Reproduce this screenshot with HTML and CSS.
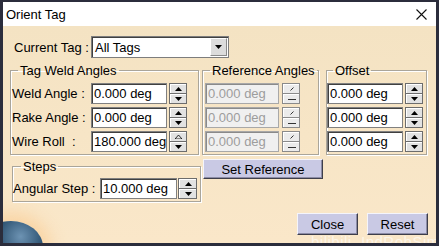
FILE: index.html
```html
<!DOCTYPE html>
<html lang="en">
<head>
    <meta charset="UTF-8">
    <title>Orient Tag</title>
    <link rel="stylesheet" href="styles.css">
</head>
<body>
    <div class="window">
        <div class="titlebar">
            <span class="title">Orient Tag</span>
            <svg class="close-x" width="11" height="11" viewBox="0 0 11 11">
                <path d="M0.5 0.5 L10.5 10.5 M10.5 0.5 L0.5 10.5" stroke="#111" stroke-width="1.1" fill="none"/>
            </svg>
        </div>

        <div class="content">
            <div class="globe"></div>

            <div class="current-row">
                <span class="current-label">Current Tag :</span>
                <div class="combo">
                    <span class="combo-text">All Tags</span>
                    <span class="combo-btn">
                        <svg width="7" height="4" viewBox="0 0 7 4"><polygon points="0,0 7,0 3.5,4" fill="#000"/></svg>
                    </span>
                </div>
            </div>

            <div class="groups">
                <fieldset class="group weld">
                    <legend>Tag Weld Angles</legend>
                    <div class="rows">
                        <div class="field">
                            <span class="label">Weld Angle :</span>
                            <div class="edit">0.000 deg</div>
                            <div class="spin">
                                <span><svg width="7" height="4" viewBox="0 0 7 4"><polygon points="0,4 7,4 3.5,0" fill="#000"/></svg></span>
                                <span><svg width="7" height="4" viewBox="0 0 7 4"><polygon points="0,0 7,0 3.5,4" fill="#000"/></svg></span>
                            </div>
                        </div>
                        <div class="field">
                            <span class="label">Rake Angle :</span>
                            <div class="edit">0.000 deg</div>
                            <div class="spin">
                                <span><svg width="7" height="4" viewBox="0 0 7 4"><polygon points="0,4 7,4 3.5,0" fill="#000"/></svg></span>
                                <span><svg width="7" height="4" viewBox="0 0 7 4"><polygon points="0,0 7,0 3.5,4" fill="#000"/></svg></span>
                            </div>
                        </div>
                        <div class="field">
                            <span class="label">Wire Roll &nbsp;:</span>
                            <div class="edit">180.00<span class="caret"></span>0 deg</div>
                            <div class="spin">
                                <span><svg width="7" height="4" viewBox="0 0 7 4"><polygon points="0,4 7,4 3.5,0" fill="none" stroke="#000" stroke-width="0.8"/></svg></span>
                                <span><svg width="7" height="4" viewBox="0 0 7 4"><polygon points="0,0 7,0 3.5,4" fill="#000"/></svg></span>
                            </div>
                        </div>
                    </div>
                </fieldset>

                <fieldset class="group ref">
                    <legend>Reference Angles</legend>
                    <div class="rows">
                        <div class="field">
                            <div class="edit disabled">0.000 deg</div>
                            <div class="spin off">
                                <span><svg width="6" height="4" viewBox="0 0 6 4"><path d="M1.5 3.5 L4.5 0.5" stroke="#333" stroke-width="1"/></svg></span>
                                <span><svg width="8" height="3" viewBox="0 0 8 3"><path d="M0 1.5 H8" stroke="#333" stroke-width="1"/></svg></span>
                            </div>
                        </div>
                        <div class="field">
                            <div class="edit disabled">0.000 deg</div>
                            <div class="spin off">
                                <span><svg width="6" height="4" viewBox="0 0 6 4"><path d="M1.5 3.5 L4.5 0.5" stroke="#333" stroke-width="1"/></svg></span>
                                <span><svg width="8" height="3" viewBox="0 0 8 3"><path d="M0 1.5 H8" stroke="#333" stroke-width="1"/></svg></span>
                            </div>
                        </div>
                        <div class="field">
                            <div class="edit disabled">0.000 deg</div>
                            <div class="spin off">
                                <span><svg width="6" height="4" viewBox="0 0 6 4"><path d="M1.5 3.5 L4.5 0.5" stroke="#333" stroke-width="1"/></svg></span>
                                <span><svg width="8" height="3" viewBox="0 0 8 3"><path d="M0 1.5 H8" stroke="#333" stroke-width="1"/></svg></span>
                            </div>
                        </div>
                    </div>
                </fieldset>

                <fieldset class="group offset">
                    <legend>Offset</legend>
                    <div class="rows">
                        <div class="field">
                            <div class="edit">0.000 deg</div>
                            <div class="spin">
                                <span><svg width="7" height="4" viewBox="0 0 7 4"><polygon points="0,4 7,4 3.5,0" fill="#000"/></svg></span>
                                <span><svg width="7" height="4" viewBox="0 0 7 4"><polygon points="0,0 7,0 3.5,4" fill="#000"/></svg></span>
                            </div>
                        </div>
                        <div class="field">
                            <div class="edit">0.000 deg</div>
                            <div class="spin">
                                <span><svg width="7" height="4" viewBox="0 0 7 4"><polygon points="0,4 7,4 3.5,0" fill="#000"/></svg></span>
                                <span><svg width="7" height="4" viewBox="0 0 7 4"><polygon points="0,0 7,0 3.5,4" fill="#000"/></svg></span>
                            </div>
                        </div>
                        <div class="field">
                            <div class="edit">0.000 deg</div>
                            <div class="spin">
                                <span><svg width="7" height="4" viewBox="0 0 7 4"><polygon points="0,4 7,4 3.5,0" fill="#000"/></svg></span>
                                <span><svg width="7" height="4" viewBox="0 0 7 4"><polygon points="0,0 7,0 3.5,4" fill="#000"/></svg></span>
                            </div>
                        </div>
                    </div>
                </fieldset>
            </div>

            <div class="steps-row">
                <fieldset class="group steps">
                    <legend>Steps</legend>
                    <div class="field">
                        <span class="label">Angular Step :</span>
                        <div class="edit">10.000 deg</div>
                        <div class="spin">
                            <span><svg width="7" height="4" viewBox="0 0 7 4"><polygon points="0,4 7,4 3.5,0" fill="#000"/></svg></span>
                            <span><svg width="7" height="4" viewBox="0 0 7 4"><polygon points="0,0 7,0 3.5,4" fill="#000"/></svg></span>
                        </div>
                    </div>
                </fieldset>
                <button class="btn set-ref">Set Reference</button>
            </div>

            <div class="actions">
                <button class="btn">Close</button>
                <button class="btn">Reset</button>
            </div>

            <div class="watermark">bilibili&nbsp; IndRobSim</div>
        </div>
    </div>
</body>
</html>
```

FILE: styles.css
```css
/* Basis */
body {
    margin: 0;
    font-family: "Liberation Sans", Arial, sans-serif;
    font-size: 13px;
    color: #000;
    background: #2b2d3c;
}

/* Dialog frame */
.window {
    width: 439px;
    height: 246px;
    box-sizing: border-box;
    border: 3px solid #2b2d3c;
    border-top-width: 2px;
    display: flex;
    flex-direction: column;
    overflow: hidden;
}

.titlebar {
    height: 24px;
    flex: none;
    background: #fff;
    display: flex;
    align-items: center;
    justify-content: space-between;
    padding: 0 9px 0 3px;
}

.title {
    font-size: 13px;
    line-height: 15px;
}

.close-x {
    margin-top: 1px;
}

.content {
    position: relative;
    flex: 1;
    background: linear-gradient(#f4e3c3, #fae7c9);
    padding: 10px 8px 0 7px;
    overflow: hidden;
}

/* Current tag */
.current-row {
    display: flex;
    align-items: center;
    height: 22px;
}

.current-label {
    width: 77px;
    padding-left: 4px;
    line-height: 15px;
}

.combo {
    width: 138px;
    height: 22px;
    box-sizing: border-box;
    background: #fff;
    border: 1px solid #7d7d7d;
    box-shadow: inset 1px 1px 0 #404040;
    display: flex;
    align-items: center;
    justify-content: space-between;
    padding: 0 1px 0 3px;
}

.combo-btn {
    width: 17px;
    height: 18px;
    box-sizing: border-box;
    background: #dcdcdc;
    border: 1px solid;
    border-color: #fff #8a8a8a #8a8a8a #fff;
    display: flex;
    align-items: center;
    justify-content: center;
}

/* Groups */
.groups {
    display: flex;
    align-items: flex-start;
    margin-top: 5px;
}

.group {
    margin: 0;
    padding: 5px 0 2px 0;
    border: 1px solid #aaa59a;
    box-shadow: inset 1px 1px 0 #fff, 1px 1px 0 #fff;
    min-width: 0;
}

.group legend {
    font-size: 13px;
    line-height: 15px;
    padding: 0 2px;
}

.rows {
    display: flex;
    flex-direction: column;
    gap: 3px;
}

.field {
    display: flex;
    align-items: center;
    height: 21px;
}

.label {
    line-height: 15px;
    white-space: nowrap;
}

.weld {
    width: 189px;
    box-sizing: border-box;
    padding-left: 1px;
}

.weld legend {
    margin-left: 6px;
}

.weld .label {
    width: 79px;
}

.ref {
    width: 117px;
    box-sizing: border-box;
    margin-left: 3px;
    padding-left: 2px;
}

.ref legend {
    margin-left: 5px;
}

.ref .edit {
    width: 74px;
}

.ref .spin {
    margin-left: 3px;
}

.offset {
    width: 101px;
    box-sizing: border-box;
    margin-left: 7px;
}

.offset legend {
    margin-left: 6px;
}

/* Edit boxes with spinners */
.edit {
    width: 76px;
    height: 21px;
    box-sizing: border-box;
    background: #fff;
    border: 1px solid #808080;
    box-shadow: inset 1px 1px 0 #404040;
    padding-left: 2px;
    line-height: 19px;
    white-space: nowrap;
    display: flex;
    align-items: center;
}

.edit.disabled {
    background: #f0f0f0;
    color: #9d9d9d;
    border-color: #a8a8a8;
    box-shadow: inset 1px 1px 0 #8a8a8a;
}

.caret {
    display: inline-block;
    width: 1px;
    height: 15px;
    background: #000;
}

.spin {
    width: 18px;
    height: 21px;
    box-sizing: border-box;
    margin-left: 2px;
    border: 1px solid #6c6c6c;
    background: #6c6c6c;
    display: flex;
    flex-direction: column;
    gap: 1px;
}

.spin span {
    flex: 1;
    background: #e2e2e2;
    border-top: 1px solid #fff;
    border-left: 1px solid #fff;
    display: flex;
    align-items: center;
    justify-content: center;
}

.spin.off {
    border-color: #8a8a8a;
    background: #8a8a8a;
}

.spin.off span {
    background: #ebebeb;
}

/* Steps + set reference */
.steps-row {
    display: flex;
    align-items: flex-start;
    margin-top: 4px;
}

.steps {
    width: 189px;
    box-sizing: border-box;
    margin-left: 2px;
    padding: 4px 3px 2px 0;
}

.steps legend {
    margin-left: 8px;
}

.steps .label {
    width: 87px;
}

.steps .edit {
    width: 77px;
}

.steps .spin {
    width: 19px;
    margin-left: 1px;
}

.btn {
    position: relative;
    font-family: "Liberation Sans", Arial, sans-serif;
    font-size: 13px;
    color: #000;
    height: 22px;
    width: 61px;
    padding: 0;
    background: #c9c9e4;
    border: 1px solid;
    border-color: #f4f4fb #3e3e4a #3e3e4a #f4f4fb;
    box-shadow: inset -1px -1px 0 #8c8ca6;
}

.set-ref {
    width: 120px;
    height: 20px;
    margin-left: 2px;
}

.actions {
    display: flex;
    justify-content: flex-end;
    gap: 9px;
    margin-top: 11px;
}

/* Background artifacts */
.globe {
    position: absolute;
    left: -24px;
    bottom: -30px;
    width: 64px;
    height: 52px;
    border-radius: 50%;
    background: radial-gradient(circle at 65% 30%, #6d93b3 0%, #2f5473 40%, #1b2c40 75%);
    box-shadow: 0 0 16px 8px rgba(250, 190, 120, 0.45);
}

.watermark {
    position: absolute;
    left: 308px;
    top: 207px;
    font-size: 15px;
    line-height: 17px;
    color: rgba(255, 255, 255, 0.6);
    white-space: nowrap;
    letter-spacing: 0.5px;
    pointer-events: none;
}
```
